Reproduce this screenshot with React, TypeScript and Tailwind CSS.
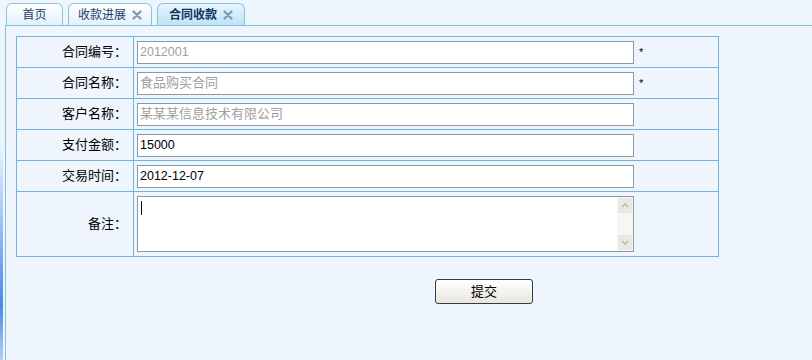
import type { ReactNode } from "react";

const font = { fontFamily: '"Liberation Sans", "Noto Sans CJK SC", sans-serif' };

function Close() {
  return (
    <svg width="10" height="10" viewBox="0 0 10 10" className="ml-[6px]">
      <path d="M1.5 1.5 L8.5 8.5 M8.5 1.5 L1.5 8.5" stroke="#7a98b8" strokeWidth="2.2" strokeLinecap="round" />
    </svg>
  );
}

function Tab({ label, active, closable, w }: { label: string; active?: boolean; closable?: boolean; w: string }) {
  return (
    <div
      className={`${w} h-[22px] flex items-center justify-center rounded-t-[6px] border border-b-0 border-[#8cc3dc] text-[12px] ${
        active
          ? "bg-gradient-to-b from-[#e6f5fd] to-[#bfe3f5] font-bold text-[#0f3560]"
          : "bg-gradient-to-b from-white to-[#e3f1fa] text-[#1c3d66]"
      }`}
    >
      <span>{label}</span>
      {closable && <Close />}
    </div>
  );
}

function Row({ label, children, tall }: { label: string; children: ReactNode; tall?: boolean }) {
  return (
    <tr className={tall ? "h-[65px]" : "h-[31px]"}>
      <td className="w-[117px] border border-[#72b4da] text-right pr-[6px] text-[13px] text-black align-middle">
        {label}：
      </td>
      <td className="border border-[#72b4da] pl-[3px] align-middle">{children}</td>
    </tr>
  );
}

function Field({ value, muted, star, cjk }: { value: string; muted?: boolean; star?: boolean; cjk?: boolean }) {
  return (
    <div className="flex items-center">
      <div
        className={`w-[497px] h-[23px] border border-[#8b98a6] bg-white flex items-center px-[2px] ${
          cjk ? "text-[13px]" : "text-[12.5px]"
        } ${muted ? "text-[#a0a0a0]" : "text-black"}`}
      >
        {value}
      </div>
      {star && <span className="ml-[5px] text-[11px] text-black">*</span>}
    </div>
  );
}

function Textarea() {
  return (
    <div className="w-[497px] h-[56px] border border-[#8b98a6] bg-white flex">
      <div className="flex-1 pl-[3px] pt-[4px]">
        <div className="w-px h-[14px] bg-black" />
      </div>
      <div className="w-[16px] flex flex-col justify-between bg-[#f6f6f2] py-px">
        <div className="h-[15px] mx-px bg-[#e9e8e1] flex items-center justify-center">
          <svg width="8" height="5" viewBox="0 0 8 5">
            <path d="M1 4 L4 1 L7 4" stroke="#b8b6a8" strokeWidth="1.3" fill="none" />
          </svg>
        </div>
        <div className="h-[15px] mx-px bg-[#e9e8e1] flex items-center justify-center">
          <svg width="8" height="5" viewBox="0 0 8 5">
            <path d="M1 1 L4 4 L7 1" stroke="#b8b6a8" strokeWidth="1.3" fill="none" />
          </svg>
        </div>
      </div>
    </div>
  );
}

export default function App() {
  return (
    <div className="w-[812px] h-[360px] bg-[#eff5fd] flex overflow-hidden" style={font}>
      <div className="w-[3px] h-full bg-gradient-to-b from-[#eff5fd] from-40% via-[#4a86e8] via-85% to-[#b9cff3]" />
      <div className="flex-1 flex flex-col">
        <div className="h-[25px] flex items-end gap-[5px] pl-[3px]">
          <Tab label="首页" w="w-[57px]" />
          <Tab label="收款进展" closable w="w-[84px]" />
          <Tab label="合同收款" closable active w="w-[88px]" />
        </div>
        <div className="flex-1 ml-[2px] border-l border-t border-[#7fc4dd] pl-[10px] pt-[10px]">
          <table className="w-[703px] border-collapse">
            <tbody>
              <Row label="合同编号">
                <Field value="2012001" muted star />
              </Row>
              <Row label="合同名称">
                <Field value="食品购买合同" muted star cjk />
              </Row>
              <Row label="客户名称">
                <Field value="某某某信息技术有限公司" muted cjk />
              </Row>
              <Row label="支付金额">
                <Field value="15000" />
              </Row>
              <Row label="交易时间">
                <Field value="2012-12-07" />
              </Row>
              <Row label="备注" tall>
                <Textarea />
              </Row>
            </tbody>
          </table>
          <div className="pl-[419px] pt-[22px]">
            <button className="w-[98px] h-[25px] rounded-[3px] border border-[#2d3e50] bg-gradient-to-b from-white to-[#e7e5dc] text-[13px] text-black">
              提交
            </button>
          </div>
        </div>
      </div>
    </div>
  );
}
